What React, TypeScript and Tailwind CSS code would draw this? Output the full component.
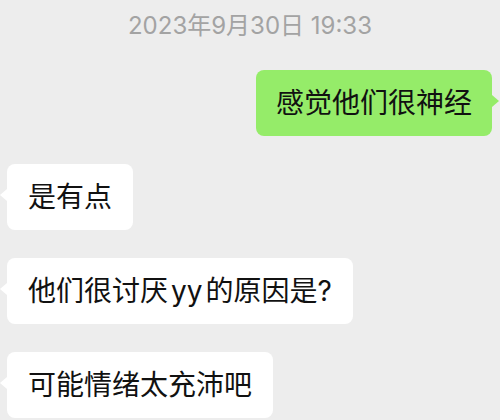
import React from 'react';

const font = { fontFamily: '"Inter", "Noto Sans CJK SC", sans-serif' };

type Msg = { text: React.ReactNode; mine?: boolean };

const MESSAGES: Msg[] = [
  { text: '感觉他们很神经', mine: true },
  { text: '是有点' },
  {
    text: (
      <>
        他们很讨厌<span className="mx-[3px]">yy</span>的原因是?
      </>
    ),
  },
  { text: '可能情绪太充沛吧' },
];

function Bubble({ text, mine }: Msg) {
  return (
    <div className={mine ? 'flex justify-end pr-[8px]' : 'flex justify-start pl-[7px]'}>
      <div
        className={
          mine
            ? 'relative rounded-[8px] bg-[#95ec69] px-[20px] py-[16px] text-[28px] leading-[34px] text-[#111]'
            : 'relative rounded-[8px] bg-white px-[21px] py-[16px] text-[28px] leading-[34px] text-[#111]'
        }
      >
        {text}
        {/* tail */}
        {mine ? (
          <span className="absolute right-[-7px] top-[25px] h-0 w-0 border-y-[6px] border-l-[7px] border-y-transparent border-l-[#95ec69]" />
        ) : (
          <span className="absolute left-[-7px] top-[25px] h-0 w-0 border-y-[6px] border-r-[7px] border-y-transparent border-r-white" />
        )}
      </div>
    </div>
  );
}

export default function App() {
  return (
    <div className="h-[420px] w-[500px] overflow-hidden bg-[#ededed]" style={font}>
      {/* Timestamp */}
      <div className="pt-[9px] text-center text-[24px] leading-[34px] text-[#a3a3a3]">
        2023年9月30日 19:33
      </div>

      <div className="mt-[27px] flex flex-col gap-[28px]">
        {MESSAGES.map((m, i) => (
          <Bubble key={i} {...m} />
        ))}
      </div>
    </div>
  );
}
